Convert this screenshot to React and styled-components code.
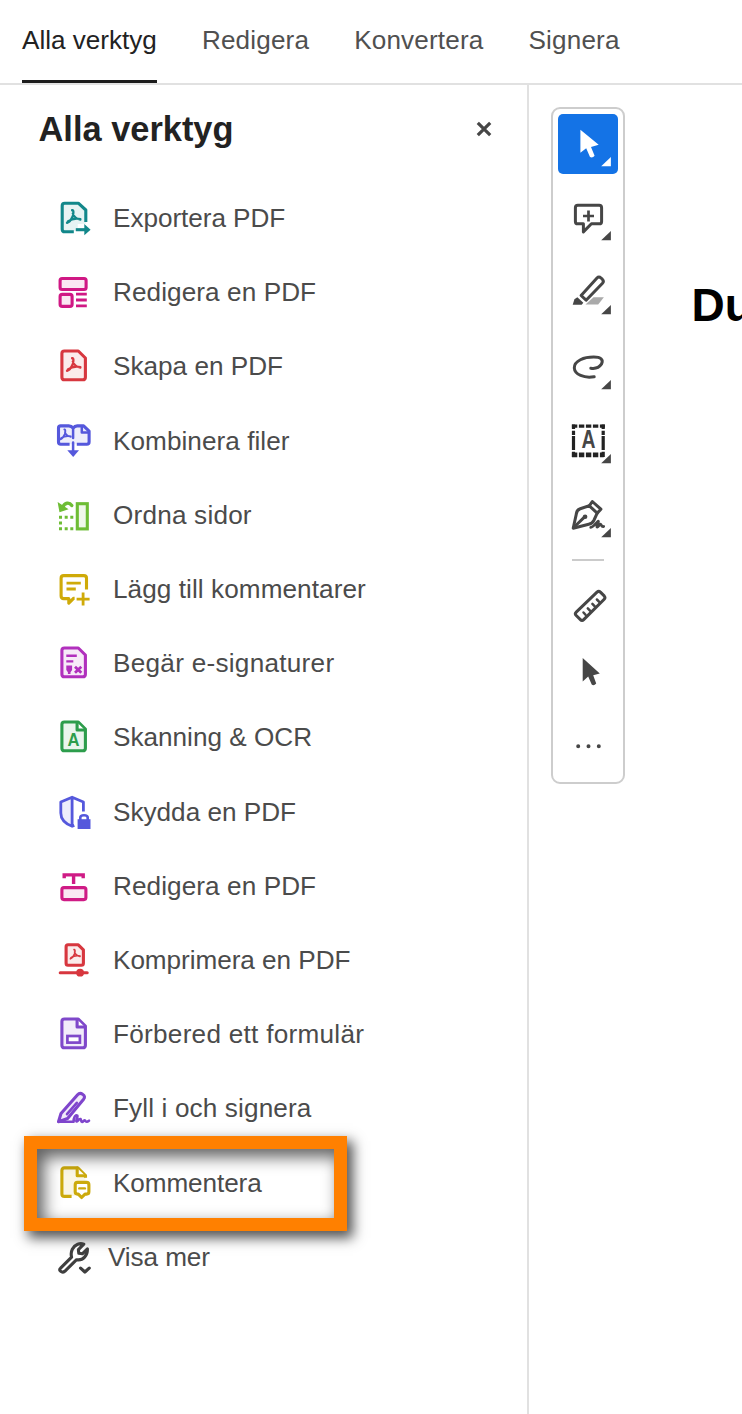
import React from "react";
import styled, { createGlobalStyle } from "styled-components";

const Global = createGlobalStyle`
  * { box-sizing: border-box; }
  body {
    margin: 0;
    background: #fff;
    color: #4b4b4b;
    font-family: "Liberation Sans", Arial, sans-serif;
    overflow: hidden;
  }
`;

const Page = styled.div`
  display: flex;
  flex-direction: column;
  width: 742px;
  height: 1414px;
  overflow: hidden;
`;

const Tabs = styled.nav`
  display: flex;
  gap: 45px;
  flex: none;
  height: 85px;
  padding-left: 22px;
  border-bottom: 2px solid #e1e1e1;
`;

const Tab = styled.a`
  height: 83px;
  padding-top: 25px;
  font-size: 26.1px;
  line-height: 30px;
  letter-spacing: ${(p) => (p.$active ? 0 : 0.17)}px;
  white-space: nowrap;
  color: ${(p) => (p.$active ? "#222" : "#505050")};
  border-bottom: 3px solid ${(p) => (p.$active ? "#1c1c1c" : "transparent")};
`;

const Body = styled.div`
  display: flex;
  flex: 1;
`;

const Sidebar = styled.aside`
  flex: none;
  width: 529px;
  border-right: 2px solid #e1e1e1;
`;

const SidebarHeader = styled.header`
  display: flex;
  align-items: center;
  justify-content: space-between;
  height: 96px;
  padding: 0 34px 8px 38.5px;
`;

const Title = styled.h1`
  margin: 0;
  font-size: 34.4px;
  line-height: 40px;
  color: #222;
`;

const CloseButton = styled.button`
  display: flex;
  padding: 0;
  border: 0;
  background: none;
`;

const ToolList = styled.ul`
  margin: 0;
  padding: 0;
  list-style: none;
`;

const ToolItem = styled.li`
  position: relative;
  display: flex;
  align-items: center;
  gap: ${(p) => (p.$tight ? 16 : 21)}px;
  height: 74.2px;
  padding-left: 56px;
`;

const ToolIcon = styled.svg`
  flex: none;
  width: 36px;
  height: 36px;
  overflow: visible;
  color: ${(p) => p.$color};
  fill: none;
  stroke: currentColor;
  stroke-width: 3.1;
  stroke-linejoin: round;
  stroke-linecap: round;
`;

const ToolLabel = styled.span`
  font-size: 26.15px;
  line-height: 30px;
  letter-spacing: ${(p) => p.$tracking ?? 0}px;
  white-space: nowrap;
`;

const Highlight = styled.div`
  position: absolute;
  left: 24px;
  top: -9.6px;
  width: 323px;
  height: 95px;
  border: 13px solid #ff8000;
  box-shadow: 5px 6px 12px 1px rgba(0, 0, 0, 0.68),
    inset 6px 7px 16px 1px rgba(0, 0, 0, 0.62);
`;

const Document = styled.main`
  display: flex;
  align-items: flex-start;
  flex: 1;
  min-width: 0;
  padding: 22px 0 0 22px;
`;

const QuickBar = styled.div`
  display: flex;
  flex-direction: column;
  align-items: center;
  flex: none;
  width: 74px;
  height: 677px;
  padding-top: 5px;
  border: 2px solid #cdcdcd;
  border-radius: 9px;
`;

const QuickButton = styled.button`
  flex: none;
  width: 60px;
  height: 60px;
  margin: 0 0 ${(p) => p.$gap ?? 14.2}px;
  padding: 0;
  border: 0;
  border-radius: 5px;
  background: ${(p) => (p.$active ? "#1473e6" : "none")};
  color: ${(p) => (p.$active ? "#fff" : "#464646")};
`;

const QuickIcon = styled.svg`
  display: block;
  width: 60px;
  height: 60px;
  fill: none;
  stroke: currentColor;
  stroke-width: 3;
  stroke-linejoin: round;
  stroke-linecap: round;
`;

const Divider = styled.hr`
  flex: none;
  width: 32px;
  height: 2px;
  margin: 0 0 15px;
  border: 0;
  background: #cbcbcb;
`;

const DocumentText = styled.div`
  flex: none;
  margin: 172px 0 0 66.5px;
  font-size: 46px;
  font-weight: 700;
  line-height: 53px;
  color: #000;
`;

const tint = { fill: "currentColor", fillOpacity: 0.1 };
const solid = { fill: "currentColor", stroke: "none" };

const Sheet = (
  <path {...tint} d="M8.6 3H22.5L29.6 10V29.2Q29.6 31.8 27 31.8H8.6Q6.1 31.8 6.1 29.2V5.6Q6.1 3 8.6 3Z" />
);
const Folded = (
  <>
    {Sheet}
    <path fill="#fff" d="M21.3 3.5V11H29" />
  </>
);
const Acrobat = ({ transform }) => (
  <path
    transform={transform}
    strokeWidth="2.3"
    d="M16.3 10.2C18.2 9.6 17.7 13.8 16.9 16.2C15.5 19.6 13.2 22.2 11.2 22.9M12 21.4C15.5 19 20.2 18 24.6 19M17 13.5C18 16.6 20.5 19 24.6 19.6"
  />
);

const tools = [
  { label: "Exportera PDF", color: "#12878a", tracking: -0.05, icon: (
    <>
      <path {...tint} stroke="none" d="M6 3H22L30 10V24H22V31H6Z" />
      <path strokeLinecap="butt" d="M18 31.8H8.9Q6.4 31.8 6.4 29.2V5.7Q6.4 3.2 8.9 3.2H22.5L30 10V22" />
      <Acrobat />
      <path strokeLinecap="butt" d="M20 29.7H30" />
      <path {...solid} d="M28.5 24L34.8 29.7L28.5 35.2Z" />
    </>
  ) },
  { label: "Redigera en PDF", color: "#d01884", tracking: 0.08, icon: (
    <>
      <rect {...tint} x="4.3" y="4.5" width="26" height="11" rx="2" />
      <rect {...tint} x="4.3" y="20.4" width="12" height="12" rx="2.2" />
      <path strokeLinecap="butt" strokeWidth="2.8" d="M20.2 20.2H31M20.2 26H31M20.2 31.8H31" />
    </>
  ) },
  { label: "Skapa en PDF", color: "#d7373f", icon: <>{Sheet}<Acrobat /></> },
  { label: "Kombinera filer", color: "#5558dc", tracking: 0.05, icon: (
    <>
      <path {...tint} strokeLinecap="butt" d="M13.8 21.2H4.9Q2.7 21.2 2.7 19V5.1Q2.7 2.9 4.9 2.9H13Q15.6 2.9 17.3 5Q19 2.9 21.4 2.9H27.8L33.3 8.2V19Q33.3 21.2 31 21.2H21" />
      <path strokeWidth="2.5" d="M17.3 5V15M26 3.5V9.5H33M17.3 19.5V30" />
      <Acrobat transform="translate(-4.2 -1.5) scale(.78)" />
      <path {...solid} d="M11.5 27.3H23.2L17.4 34Z" />
    </>
  ) },
  { label: "Ordna sidor", color: "#6ebd35", tracking: 0.2, icon: (
    <>
      <rect {...tint} x="21.5" y="6.7" width="10" height="25.2" strokeLinejoin="miter" />
      <path strokeWidth="3.4" d="M16 8.5C13.5 4.9 9 5.5 7 10" />
      <path {...solid} d="M1.8 5L3.7 15.2L12.8 12.3Z" />
      <path {...solid} d="M3.2 18.7H6.2V21.7H3.2ZM8.9 18.7H11.9V21.7H8.9ZM14.5 18.7H17.5V21.7H14.5ZM3.2 24.5H6.2V27.5H3.2ZM3.2 30.3H6.2V33.3H3.2ZM8.9 30.3H11.9V33.3H8.9ZM14.5 30.3H17.5V33.3H14.5Z" />
    </>
  ) },
  { label: "Lägg till kommentarer", color: "#cfaa08", tracking: 0.07, icon: (
    <>
      <path strokeLinecap="butt" d="M18.8 27.2H18L13 32.2V27.6H7.9Q5.3 27.6 5.3 25V7.2Q5.3 4.6 7.9 4.6H28Q30.7 4.6 30.7 7.2V18.5" />
      <path strokeLinecap="butt" strokeWidth="2.8" d="M10.7 12.2H25M10.7 18H20M27.3 21.6V34.6M20.8 28.1H33.8" />
    </>
  ) },
  { label: "Begär e-signaturer", color: "#b130bd", tracking: 0.27, icon: (
    <>
      {Sheet}
      <path strokeLinecap="butt" strokeWidth="2.4" d="M10.5 10.8H21M10.5 16.4H17.5" />
      <path {...solid} d="M10.5 20.5H16.3V25L14.7 27.2V29H12.1V27.2L10.5 25Z" />
      <path strokeLinecap="butt" strokeWidth="2.8" d="M19.2 21.8L25.5 27.8M25.5 21.8L19.2 27.8" />
    </>
  ) },
  { label: "Skanning & OCR", color: "#2d9d4c", icon: (
    <>
      {Folded}
      <text {...solid} x="11.8" y="26.6" textLength="12" lengthAdjust="spacingAndGlyphs" fontSize="17.5" fontWeight="700">A</text>
    </>
  ) },
  { label: "Skydda en PDF", color: "#5558dc", icon: (
    <>
      <path {...tint} stroke="none" d="M16.3 3.5L5 8V21Q7 28 16.3 32Z" />
      <path strokeLinecap="butt" strokeWidth="2.8" d="M18.5 31.4L16.3 32.3C8.5 29.3 5 25.5 5 19V8L16.3 3.2L27.6 8V17.5M16.3 4V32" />
      <path strokeWidth="2.6" d="M24.5 26V23.5Q24.5 21.3 28.2 21.3Q31.9 21.3 31.9 23.5V26" />
      <path {...solid} d="M21.8 25.2H34.7V35H21.8Z" />
    </>
  ) },
  { label: "Redigera en PDF", color: "#cf1b85", tracking: 0.08, icon: (
    <>
      <path strokeLinecap="butt" strokeLinejoin="miter" strokeWidth="3.4" d="M8.4 10.3V6.9H27.4V10.3M17.8 6.9V16" />
      <rect {...tint} x="6.1" y="19.6" width="24" height="12" rx="2" />
    </>
  ) },
  { label: "Komprimera en PDF", color: "#d7373f", tracking: -0.05, icon: (
    <>
      <path {...tint} d="M12.2 2.8H22.5L27.6 7.8V21.3Q27.6 23.3 25.6 23.3H12.2Q10.3 23.3 10.3 21.3V4.8Q10.3 2.8 12.2 2.8Z" />
      <Acrobat transform="translate(6.5 .3) scale(.72)" />
      <path d="M4.4 30.7H31.4" strokeWidth="3" />
      <circle {...solid} cx="24.3" cy="30.7" r="3.9" />
    </>
  ) },
  { label: "Förbered ett formulär", color: "#7f48ca", tracking: 0.27, icon: (
    <>
      {Folded}
      <rect x="11.6" y="20" width="12.5" height="6.6" strokeWidth="2.7" fill="#fff" strokeLinejoin="miter" />
    </>
  ) },
  { label: "Fyll i och signera", color: "#7f45cc", tracking: 0.13, icon: (
    <>
      <path {...tint} d="M2.7 31.7L5.2 23.5L21.8 4.7Q24 2.2 26.8 4.2Q30 6.2 27.8 9.2L11.8 28.5Z" />
      <path strokeWidth="2.6" d="M11.2 24.2L21 12.8M3 31.8H17.8C17.7 27.5 19.7 24.3 21.4 25.5C22.7 26.8 19.5 31 20.7 31.5C22 31.7 23 28.4 24.6 29C25.5 29.5 24.9 31.8 26.3 31.9C27.5 31.9 28.2 29.7 29.3 30.5C30.3 32.5 31.6 31.8 33.2 30.7" />
    </>
  ) },
  { label: "Kommentera", color: "#ccaa0c", tracking: -0.1, highlighted: true, icon: (
    <>
      <path {...tint} stroke="none" d="M6.1 3H22L29.6 10V17H19V31H6.1Z" />
      <path strokeLinecap="butt" d="M15.8 31.4H8.6Q6.1 31.4 6.1 28.9V5.4Q6.1 2.9 8.6 2.9H22L29.7 10.5V12.8" />
      <path fill="#fff" d="M21.4 3V10.8H29.5" />
      <path fill="#fff" d="M21.6 17.4H30.8Q33.1 17.4 33.1 19.8V26.8Q33.1 29.1 30.8 29.1H29.2L25.8 32.5L22.5 29.1H21.6Q19.4 29.1 19.4 26.8V19.8Q19.4 17.4 21.6 17.4Z" />
      <path d="M23.5 23.4H29.1" strokeWidth="2.4" />
    </>
  ) },
  { label: "Visa mer", color: "#3f3f3f", tracking: -0.1, tight: true, icon: (
    <>
      <path d="M4.8 29.2L15.8 18.1C14.3 12.6 17.2 7 21.8 5.2Q25.1 4 28 5.2L22.6 10.7L23 14.2L26.5 14.8L31.6 9.8C32 16.2 27.3 22 20.8 20.7L9 32.3Q6.8 34 4.7 32.1Q3 30.8 4.8 29.2Z" />
      <path strokeWidth="3.2" d="M24.8 29.1L29.1 33L33.4 29.1" />
    </>
  ) },
];

const Corner = () => <path {...solid} d="M52.7 43V52.3H43Z" />;

const quickTools = [
  { name: "Markera", active: true, icon: (
    <>
      <path {...solid} d="M22.2 15.7V38.7L28 34.2L31.8 43Q34.4 44.2 36.4 41.8L32.8 33L40.5 30.8Z" />
      <Corner />
    </>
  ) },
  { name: "Kommentar", icon: (
    <>
      <path d="M19.6 17.3H41Q43.4 17.3 43.4 19.7V33.4Q43.4 35.8 41 35.8H33.2L25.2 43.9V35.8H19.6Q17.2 35.8 17.2 33.4V19.7Q17.2 17.3 19.6 17.3Z" />
      <path strokeLinecap="butt" strokeWidth="2.7" d="M30.3 22.5V33.5M24.8 28H35.8" />
      <Corner />
    </>
  ) },
  { name: "Överstryk", icon: (
    <>
      <path d="M22.9 33.5L38.8 16Q40.7 14 42.8 16L44.1 17.2Q46.1 19.2 44.3 21.2L27.9 38.2Z" />
      <path {...solid} d="M19.2 35.2L25.1 40.7L23.5 42.7H14.5L16.2 37.3Z" />
      <path {...solid} fill="#aaa" d="M35.3 35.3H45.7L40 42.6H27.3Z" />
      <Corner />
    </>
  ) },
  { name: "Rita", icon: (
    <>
      <path d="M36 39.7C26 41.5 16.4 37.5 16.1 31C16 23.5 26 20.1 35.5 20.1C42.5 20.1 45.7 22.5 43.2 27.2C41 30.5 36.5 31.8 32.6 31.2" />
      <Corner />
    </>
  ) },
  { name: "Text", icon: (
    <>
      <path stroke="#222" strokeLinecap="butt" strokeDasharray="5.4 1.6" strokeWidth="3.4" d="M13.7 15.1H46.7" />
      <path stroke="#222" strokeLinecap="butt" strokeDasharray="5.4 1.6" strokeWidth="4.6" d="M13.7 43.9H45.5" />
      <path stroke="#222" strokeLinecap="butt" strokeDasharray="4.5 1.7 4.2 1.2 14 1.7 6" strokeWidth="3.2" d="M15.3 13.5V46M45 13.5V46" />
      <text {...solid} x="23.4" y="37.4" textLength="14" lengthAdjust="spacingAndGlyphs" fontSize="25" fontWeight="700">A</text>
      <Corner />
    </>
  ) },
  { name: "Signera", icon: (
    <>
      <path d="M15 43.2L18.1 29.1Q18.5 24.8 22 23.7L31.1 20.8L39 28.1L35.6 35.5Q34.1 38.5 30.5 39.2L15 43.2Z" />
      <path d="M31.1 20.8L34.1 16.5L42.7 24.2L39 28.1M15.5 42.5L26.7 31.7" />
      <circle {...solid} cx="26.9" cy="31.7" r="2.3" />
      <path strokeWidth="2.7" d="M32.5 42.4C35.5 42.1 39.8 35.6 40.2 36.1C41.2 37.1 37.3 42.2 39.2 42.1C40.6 42 41.5 38.6 42.6 39.3C43.3 40.2 43.5 42.2 45.5 41.5" />
      <Corner />
    </>
  ) },
  { divider: true },
  { name: "Mät", gap: 6, icon: (
    <>
      <path d="M18 36.1L38.8 16.1Q40.5 14.6 42.2 16.1L46 19.9Q47.5 21.7 46 23.2L25.5 43.6Q23.8 45.3 22.2 43.6L18 39.5Q16.3 37.8 18 36.1Z" />
      <path strokeWidth="2.5" d="M25.3 36.5L27.3 38.8M29.6 32.3L32 34.8M34.2 27.8L36.6 30.3M38.7 23.5L41 25.8" />
    </>
  ) },
  { name: "Välj objekt", gap: 14, icon: (
    <path {...solid} d="M24.5 16V39.4L30 34.6L33.5 42.6Q35.7 44.2 38 41.6L35 33.2L41.6 31.4Z" />
  ) },
  { name: "Fler", gap: 0, icon: (
    <path {...solid} d="M18 30.3A2 2 0 1 0 22 30.3A2 2 0 1 0 18 30.3M28.3 30.3A2 2 0 1 0 32.3 30.3A2 2 0 1 0 28.3 30.3M38.6 30.3A2 2 0 1 0 42.6 30.3A2 2 0 1 0 38.6 30.3" />
  ) },
];

export default function App() {
  return (
    <Page>
      <Global />
      <Tabs>
        <Tab $active>Alla verktyg</Tab>
        <Tab>Redigera</Tab>
        <Tab>Konvertera</Tab>
        <Tab>Signera</Tab>
      </Tabs>
      <Body>
        <Sidebar>
          <SidebarHeader>
            <Title>Alla verktyg</Title>
            <CloseButton>
              <svg width="18" height="18" viewBox="0 0 18 18">
                <path d="M2.8 2.8L15.2 15.2M15.2 2.8L2.8 15.2" stroke="#464646" strokeWidth="3.2" />
              </svg>
            </CloseButton>
          </SidebarHeader>
          <ToolList>
            {tools.map((tool, i) => (
              <ToolItem key={i} $tight={tool.tight}>
                {tool.highlighted && <Highlight />}
                <ToolIcon $color={tool.color} viewBox="0.2 0 36 36">{tool.icon}</ToolIcon>
                <ToolLabel $tracking={tool.tracking}>{tool.label}</ToolLabel>
              </ToolItem>
            ))}
          </ToolList>
        </Sidebar>
        <Document>
          <QuickBar>
            {quickTools.map((tool, i) =>
              tool.divider ? (
                <Divider key={i} />
              ) : (
                <QuickButton key={i} $active={tool.active} $gap={tool.gap}>
                  <QuickIcon viewBox="-0.2 0 60 60">{tool.icon}</QuickIcon>
                </QuickButton>
              )
            )}
          </QuickBar>
          <DocumentText>Du</DocumentText>
        </Document>
      </Body>
    </Page>
  );
}
